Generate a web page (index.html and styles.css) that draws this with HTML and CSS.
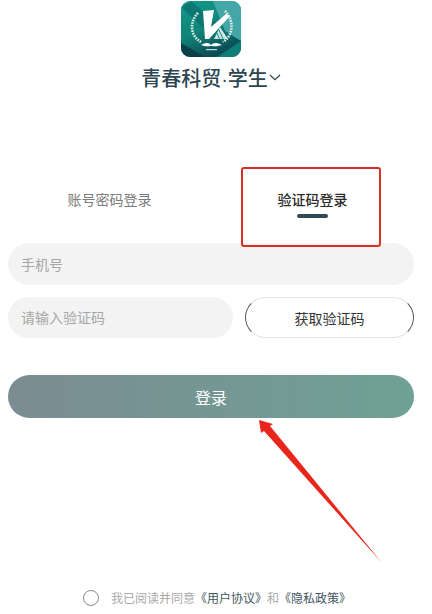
FILE: index.html
```html
<!DOCTYPE html>
<html lang="zh-CN">
  <head>
    <meta charset="UTF-8" />
    <meta name="viewport" content="width=device-width, initial-scale=1.0" />
    <title>登录</title>
    <link rel="stylesheet" href="styles.css">
  </head>
  <body>
    <section class="page">
      <div class="brand">
        <svg class="logo" viewBox="0 0 60 56" aria-label="logo">
          <defs>
            <linearGradient id="logoBg" x1="0" y1="0" x2="0.4" y2="1">
              <stop offset="0" stop-color="#129a8b" />
              <stop offset="0.6" stop-color="#108277" />
              <stop offset="1" stop-color="#0a4d55" />
            </linearGradient>
            <clipPath id="logoClip">
              <rect width="60" height="56" rx="9" />
            </clipPath>
          </defs>
          <g clip-path="url(#logoClip)">
            <rect width="60" height="56" fill="url(#logoBg)" />
            <polygon points="32,0 60,0 60,40 44,30" fill="#45a6a8" />
            <polygon points="0,6 10,0 40,26 30,34" fill="#0c6f6c" opacity="0.75" />
            <polygon points="0,42 24,56 0,56" fill="#0a3f4a" />
            <polygon points="60,40 60,56 36,56" fill="#0e7d76" />
          </g>
          <g fill="none" stroke="#e3f0ec" stroke-width="2.6" stroke-dasharray="1.6 1.1">
            <path d="M17 12 C9 20 8 34 20 41" />
            <path d="M44 10 C53 19 53 34 42 41" />
          </g>
          <polygon points="22,10 33,9 30,26 45,13 49,15 28,38 24,38" fill="#fff" />
          <polygon points="39,26 47,38 33,38" fill="#cfe6e2" />
          <path d="M38 29l4 9M36 32l2.5 6" stroke="#128a80" stroke-width="1" />
          <path d="M20 44 C26 41 28 42 30 44 C32 42 35 41 41 44 C35 46 32 45 30 45 C28 45 25 46 20 44 Z" fill="#fff" />
          <rect x="25" y="48" width="11" height="1.2" fill="#bfe0da" />
        </svg>
        <h1 class="school">
          青春科贸·学生
          <svg class="caret" viewBox="0 0 12 7"><path d="M1 1l5 4.6L11 1" /></svg>
        </h1>
      </div>

      <div class="tabs">
        <div class="tab">账号密码登录</div>
        <div class="tab active">验证码登录</div>
      </div>

      <div class="form">
        <div class="field">手机号</div>
        <div class="code-row">
          <div class="field">请输入验证码</div>
          <button type="button" class="send">获取验证码</button>
        </div>
        <button type="button" class="submit">登录</button>
      </div>

      <div class="agree">
        <span class="radio"></span>
        <p>我已阅读并同意<b>《用户协议》</b>和<b>《隐私政策》</b></p>
      </div>

      <!-- annotations drawn on top of the screenshot -->
      <div class="mark-box"></div>
      <svg class="mark-arrow" viewBox="0 0 432 614">
        <polygon points="259,420 273,424 270,426 382,563 264,431 261,433" fill="#e8261c" />
      </svg>
    </section>
  </body>
</html>
```

FILE: styles.css
```css
* {
  margin: 0;
  padding: 0;
  box-sizing: border-box;
  font-family: "Noto Sans CJK SC", "Noto Sans", sans-serif;
}

body {
  background-color: white;
}

.page {
  position: relative;
  width: 432px;
  height: 614px;
  padding: 0 18px 0 8px;
  overflow: hidden;
}

.brand {
  display: flex;
  flex-direction: column;
  align-items: center;
  padding-top: 1px;
}
.logo {
  width: 60px;
  height: 56px;
  display: block;
}
.school {
  display: flex;
  align-items: center;
  gap: 1px;
  margin-top: 5px;
  height: 30px;
  font-family: "Liberation Sans", "Noto Sans CJK SC", sans-serif;
  font-size: 20px;
  font-weight: 500;
  color: #2c4550;
}
.caret {
  width: 12px;
  height: 7px;
  fill: none;
  stroke: #2c4550;
  stroke-width: 1.2;
}

.tabs {
  display: grid;
  grid-template-columns: 1fr 1fr;
  margin-top: 90px;
  height: 61px;
}
.tab {
  text-align: center;
  font-size: 14px;
  line-height: 22px;
  padding-top: 6px;
  color: #7b7b7b;
}
.active {
  color: #2b2b2b;
  font-weight: 500;
}
.active::after {
  content: "";
  display: block;
  width: 31px;
  height: 4px;
  margin: 4px auto 0;
  border-radius: 2px;
  background-color: #2f4a55;
}

.form {
  display: flex;
  flex-direction: column;
}
.field {
  height: 42px;
  line-height: 42px;
  padding-left: 13px;
  border-radius: 21px;
  background-color: #f3f3f3;
  font-size: 14px;
  color: #a6a6a6;
}
.code-row {
  display: grid;
  grid-template-columns: 225px 169px;
  justify-content: space-between;
  align-items: start;
  margin-top: 12px;
}
.code-row .field {
  height: 41px;
  line-height: 41px;
  border-radius: 20.5px;
}
.send {
  height: 41px;
  border: 1px solid;
  border-color: #e4e4e4 #555 #e4e4e4 #555;
  border-radius: 20.5px;
  background-color: white;
  font-size: 14px;
  color: #333;
}
.submit {
  height: 43px;
  margin-top: 37px;
  border: none;
  border-radius: 21.5px;
  background-image: linear-gradient(90deg, #7b8c92, #6fa194);
  font-size: 16px;
  color: white;
}

.agree {
  display: flex;
  align-items: center;
  gap: 12px;
  margin-top: 171px;
  padding-left: 75px;
}
.radio {
  width: 16px;
  height: 16px;
  border: 1px solid #8a8a8a;
  border-radius: 50%;
}
.agree p {
  font-size: 12px;
  line-height: 18px;
  color: #a8a8a8;
  white-space: nowrap;
}
.agree b {
  font-weight: 400;
  color: #3f5560;
}

.mark-box {
  position: absolute;
  left: 241px;
  top: 167px;
  width: 140px;
  height: 80px;
  border: 2px solid #d93025;
  border-radius: 3px;
}
.mark-arrow {
  position: absolute;
  left: 0;
  top: 0;
  width: 432px;
  height: 614px;
}
```
